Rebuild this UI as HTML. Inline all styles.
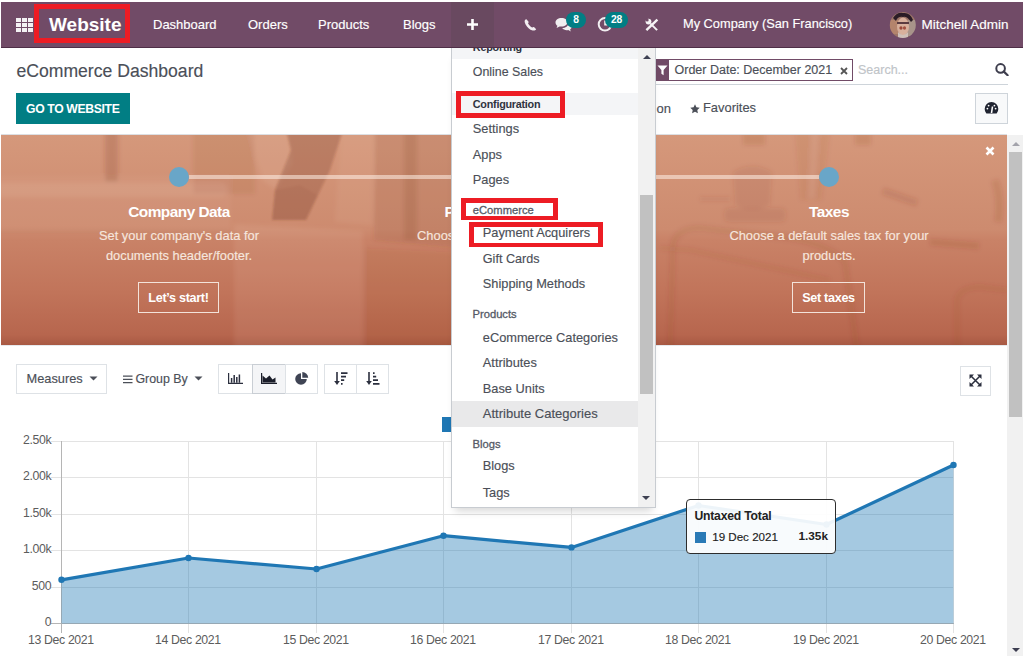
<!DOCTYPE html>
<html><head><meta charset="utf-8">
<style>
*{box-sizing:border-box}
html,body{margin:0;padding:0}
body{width:1024px;height:657px;overflow:hidden;position:relative;background:#fff;font-family:"Liberation Sans",sans-serif;color:#4a4f59}
.a{position:absolute}
.t{position:absolute;white-space:nowrap;line-height:1;-webkit-text-stroke:0.15px currentColor}
.t[style*="bold"]{-webkit-text-stroke:0}
.red{position:absolute;border:5px solid #ed1c24}
#nav{left:1px;top:2px;width:1022px;height:46px;background:#714b67;border-bottom:1px solid #4f2e47}
#nav .t{color:#fff}
</style></head><body>

<!-- NAVBAR -->
<div id="nav" class="a"></div>
<!-- grid icon -->
<svg class="a" style="left:16px;top:18px" width="18" height="15" viewBox="0 0 18 15">
<g fill="#f4f2f4">
<rect x="0" y="0" width="5" height="4"/><rect x="6" y="0" width="5" height="4"/><rect x="12" y="0" width="5" height="4"/>
<rect x="0" y="5" width="5" height="4"/><rect x="6" y="5" width="5" height="4"/><rect x="12" y="5" width="5" height="4"/>
<rect x="0" y="10" width="5" height="4"/><rect x="6" y="10" width="5" height="4"/><rect x="12" y="10" width="5" height="4"/>
</g></svg>
<div class="t" style="left:49px;top:15px;font-size:19px;font-weight:bold;color:#fff">Website</div>
<div class="red" style="left:34px;top:4px;width:96px;height:39px"></div>

<div class="t" style="left:153px;top:18px;font-size:13px;color:#fff">Dashboard</div>
<div class="t" style="left:248px;top:18px;font-size:13px;color:#fff">Orders</div>
<div class="t" style="left:318px;top:18px;font-size:13px;color:#fff">Products</div>
<div class="t" style="left:403px;top:18px;font-size:13px;color:#fff">Blogs</div>
<div class="a" style="left:451px;top:2px;width:43px;height:45px;background:#694960"></div>
<svg class="a" style="left:467px;top:19px" width="11" height="11" viewBox="0 0 11 11"><path d="M4.2 0h2.6v4.2H11v2.6H6.8V11H4.2V6.8H0V4.2h4.2z" fill="#fff"/></svg>

<!-- phone -->
<svg class="a" style="left:523.8px;top:19.4px" width="13" height="12" viewBox="0 0 13 12"><path d="M1.6 0.6 C0.2 1.4 0.4 3.4 1.6 5.4 C3.2 8.2 5.6 10.8 8.6 11.4 C10.2 11.7 11.6 11.2 12.2 10.2 L10.2 8.2 C9.6 7.8 9 8 8.4 8.6 C6.6 7.8 4.8 6 4 4.2 C4.6 3.6 4.8 3 4.4 2.4 L2.6 0.4 C2.2 0.1 1.9 0.4 1.6 0.6z" fill="#f2eef1"/></svg>
<!-- chat -->
<svg class="a" style="left:555px;top:17px" width="17" height="15" viewBox="0 0 17 15"><path d="M6.5 1C3 1 0.5 3 0.5 5.4c0 1.3 0.7 2.5 1.9 3.3L1.6 11l3-1.6c0.6 0.1 1.2 0.2 1.9 0.2 3.5 0 6-2 6-4.3S10 1 6.5 1z" fill="#f0eef0"/><path d="M13.4 6.2c0 2.9-3 4.9-6.2 4.9 0.9 1.3 2.6 2.1 4.5 2.1 0.5 0 1-0.1 1.5-0.2l2.6 1.4-0.7-2c1.1-0.7 1.7-1.7 1.7-2.9 0-1.4-1.1-2.6-2.6-3.1z" fill="#f0eef0"/></svg>
<div class="a" style="left:566px;top:12px;width:20px;height:16px;border-radius:8px;background:#017e84"></div>
<div class="t" style="left:566px;top:15px;width:20px;text-align:center;font-size:10.3px;font-weight:bold;color:#fff">8</div>
<!-- clock -->
<svg class="a" style="left:597px;top:16px" width="16" height="16" viewBox="0 0 16 16"><circle cx="8" cy="8.3" r="6.3" fill="none" stroke="#f2eef1" stroke-width="2"/><path d="M8 4.5V8.6H11" fill="none" stroke="#f2eef1" stroke-width="1.6"/></svg>
<div class="a" style="left:605px;top:12px;width:23px;height:16px;border-radius:8px;background:#017e84"></div>
<div class="t" style="left:605px;top:15px;width:23px;text-align:center;font-size:10.3px;letter-spacing:-0.3px;font-weight:bold;color:#fff">28</div>
<!-- tools -->
<svg class="a" style="left:644px;top:17px" width="16" height="16" viewBox="0 0 16 16"><path d="M2.4 13.1L13.4 2.7" stroke="#f6f4f6" stroke-width="2.4"/><path d="M6.5 6.6L13.1 13.1" stroke="#f6f4f6" stroke-width="2"/><circle cx="4.5" cy="4.6" r="2.9" fill="#f6f4f6"/><circle cx="3.2" cy="3.1" r="1.5" fill="#714b67"/></svg>
<div class="t" style="left:683px;top:18px;font-size:12.8px;color:#fff">My Company (San Francisco)</div>
<svg class="a" style="left:889px;top:12px" width="28" height="26" viewBox="0 0 28 26"><defs><clipPath id="av"><circle cx="13.8" cy="13" r="13"/></clipPath><filter id="avb"><feGaussianBlur stdDeviation="0.7"/></filter></defs><g clip-path="url(#av)"><g filter="url(#avb)">
<rect width="28" height="26" fill="#9c7468"/>
<rect x="0" y="8" width="9" height="14" fill="#b4846c"/>
<rect x="19" y="8" width="9" height="16" fill="#a8948a"/>
<path d="M4 6 Q8 0 14 1 Q21 0 24 8 L22 10 Q18 4 14 5 Q9 4 7 9z" fill="#2a1d25"/>
<ellipse cx="14" cy="14.5" rx="6" ry="9" fill="#d8b09c"/>
<rect x="8" y="10" width="12" height="2" fill="#5a3a40"/>
<ellipse cx="12" cy="16" rx="1.6" ry="1.8" fill="#9a4a3a"/>
<ellipse cx="15.5" cy="16" rx="1.6" ry="1.8" fill="#a25040"/>
<path d="M9 20 Q14 26 19 20 L19 26 L9 26z" fill="#cfc0b8"/>
</g></g></svg>
<div class="t" style="left:921.5px;top:18px;font-size:13.5px;color:#fff">Mitchell Admin</div>

<!-- CONTROL PANEL -->
<div class="t" style="left:16.5px;top:63px;font-size:17.6px;color:#4b4f58">eCommerce Dashboard</div>
<div class="a" style="left:16px;top:93px;width:114px;height:31px;background:#017e84"></div>
<div class="t" style="left:26px;top:103px;font-size:12.2px;font-weight:bold;letter-spacing:-0.35px;color:#fff">GO TO WEBSITE</div>

<div class="a" style="left:600px;top:84px;width:408px;height:1px;background:#ced4da"></div>
<div class="a" style="left:656px;top:59px;width:197px;height:22px;border:1px solid #714b67"></div>
<div class="a" style="left:656px;top:59px;width:13px;height:22px;background:#714b67"></div>
<svg class="a" style="left:657px;top:65px" width="11" height="11" viewBox="0 0 11 11"><path d="M0.5 0.5h10L6.6 5v5.2L4.4 8.8V5z" fill="#fff"/></svg>
<div class="t" style="left:674.5px;top:63.5px;font-size:12.5px;color:#4b4f58">Order Date: December 2021</div>
<svg class="a" style="left:840px;top:67px" width="8" height="8" viewBox="0 0 8 8"><path d="M1 1L7 7M7 1L1 7" stroke="#555" stroke-width="1.8"/></svg>
<div class="t" style="left:858px;top:63.5px;font-size:12.5px;color:#c0c4c8">Search...</div>
<svg class="a" style="left:995px;top:63px" width="14" height="13" viewBox="0 0 14 13"><circle cx="5.6" cy="5.4" r="4.3" fill="none" stroke="#3d3d4d" stroke-width="2"/><path d="M8.6 8.4L12.6 12.2" stroke="#3d3d4d" stroke-width="2.2" stroke-linecap="round"/></svg>

<div class="t" style="left:656.5px;top:101.8px;font-size:13px;color:#4b4f58">on</div>
<svg class="a" style="left:689.7px;top:104px" width="10" height="10" viewBox="0 0 10 10"><path d="M5 0.3l1.4 3 3.3 0.4-2.4 2.3 0.6 3.3L5 7.7 2.1 9.3l0.6-3.3L0.3 3.7l3.3-0.4z" fill="#4b4f58"/></svg>
<div class="t" style="left:703px;top:101.8px;font-size:12.9px;color:#4b4f58">Favorites</div>
<div class="a" style="left:975px;top:93px;width:33px;height:31px;border:1px solid #ced4da;background:#f8f9fa"></div>
<svg class="a" style="left:984px;top:101px" width="15" height="14" viewBox="0 0 15 14"><path d="M7.5 1A6.8 6.8 0 0 0 0.7 7.8c0 1.7 0.6 3.3 1.7 4.6h10.2c1.1-1.3 1.7-2.9 1.7-4.6A6.8 6.8 0 0 0 7.5 1z" fill="#1f2330"/><path d="M7.5 12l1-6.5" stroke="#fff" stroke-width="1.6"/><circle cx="3.4" cy="7.6" r="0.9" fill="#fff"/><circle cx="4.6" cy="4.6" r="0.9" fill="#fff"/><circle cx="11.6" cy="7.6" r="0.9" fill="#fff"/><circle cx="10.4" cy="4.6" r="0.9" fill="#fff"/></svg>
<div class="a" style="left:1px;top:134px;width:1006px;height:1px;background:#dcdfe3"></div>

<!-- BANNER -->
<svg class="a" style="left:1px;top:135px" width="1006" height="210" viewBox="1 135 1006 210">
<defs>
<linearGradient id="bg" x1="0" y1="0" x2="0" y2="1">
<stop offset="0" stop-color="#d5987b"/><stop offset="0.45" stop-color="#cd8b6f"/><stop offset="0.5" stop-color="#c98267"/><stop offset="0.75" stop-color="#c1745a"/><stop offset="0.95" stop-color="#b7664e"/><stop offset="1" stop-color="#a85943"/>
</linearGradient>
<filter id="b1" x="-20%" y="-20%" width="140%" height="140%"><feGaussianBlur stdDeviation="1.2"/></filter>
<filter id="b2" x="-20%" y="-20%" width="140%" height="140%"><feGaussianBlur stdDeviation="2"/></filter>
<filter id="b4" x="-20%" y="-20%" width="140%" height="140%"><feGaussianBlur stdDeviation="4"/></filter>
</defs>
<rect x="1" y="135" width="1006" height="210" fill="url(#bg)"/>
<g filter="url(#b2)">
<rect x="105" y="130" width="13" height="52" fill="#7a3a25" fill-opacity="0.2"/>
<rect x="-5" y="176" width="236" height="54" fill="#fff0e6" fill-opacity="0.04"/>
<rect x="193" y="130" width="62" height="64" fill="#7a3a25" fill-opacity="0.09"/>
<rect x="-10" y="183" width="238" height="14" rx="7" fill="#fff0e6" fill-opacity="0.08"/>
<rect x="-5" y="229" width="236" height="3" fill="#8a4a35" fill-opacity="0.06"/>
<polygon points="248,130 288,130 292,164 275,189 262,180" fill="#ffece0" fill-opacity="0.08"/>

<polygon points="341,130 375,130 372,225 335,222" fill="#ffece0" fill-opacity="0.06"/>
<polygon points="234,224 363,231 363,350 234,350" fill="#ffeadc" fill-opacity="0.08"/>
<polygon points="374,130 460,130 460,248 374,240" fill="#7a3a25" fill-opacity="0.13"/>
<rect x="404" y="130" width="13" height="110" fill="#7a3a25" fill-opacity="0.14"/>
<polygon points="363,248 460,252 460,350 363,350" fill="#7a3a25" fill-opacity="0.07"/>
</g>
<g filter="url(#b1)">
<polygon points="286,130 343,130 330,170 318,195 306,220 272,220 275,190 285,165 291,150" fill="#6e3020" fill-opacity="0.25"/>
<polygon points="300,185 318,195 306,220 272,220 275,190" fill="#6e3020" fill-opacity="0.06"/>
</g>
<g filter="url(#b2)">
<path d="M733 172 Q752 160 772 172 L770 205 Q752 214 735 205z" fill="#7a3a25" fill-opacity="0.1"/>
<rect x="724" y="208" width="62" height="14" rx="5" fill="#7a3a25" fill-opacity="0.1"/>
<rect x="700" y="197" width="30" height="4" fill="#7a3a25" fill-opacity="0.1"/>
<rect x="743" y="133" width="22" height="12" fill="#7a3a25" fill-opacity="0.12"/>
<path d="M795 133 L830 133 L822 200 L800 200z" fill="#7a3a25" fill-opacity="0.07"/>
<path d="M812 133 L818 133 L814 198 L809 198z" fill="#fff3ea" fill-opacity="0.1"/>
<rect x="855" y="133" width="16" height="12" fill="#7a3a25" fill-opacity="0.12"/>
<path d="M670 350 L673 245 Q676 228 700 228 L790 238 Q830 245 845 262 L857 350" fill="none" stroke="#7a3a25" stroke-opacity="0.09" stroke-width="6"/>
<path d="M660 248 L690 250 L830 280" fill="none" stroke="#7a3a25" stroke-opacity="0.08" stroke-width="5"/>
<path d="M883 191 L917 203" stroke="#7a3a25" stroke-opacity="0.14" stroke-width="7"/>
<path d="M930 242 L979 246" stroke="#7a3a25" stroke-opacity="0.12" stroke-width="7"/>
<path d="M995 180 Q1002 200 998 222" stroke="#7a3a25" stroke-opacity="0.12" stroke-width="8" fill="none"/>
<path d="M957 350 L957 300 Q960 287 980 287 L1007 290" fill="none" stroke="#7a3a25" stroke-opacity="0.08" stroke-width="6"/>
</g>
</svg>
<div class="a" style="left:189px;top:175px;width:630px;height:4px;background:rgba(255,240,232,0.55)"></div>
<div class="a" style="left:169px;top:167px;width:20px;height:20px;border-radius:50%;background:#69a6c8"></div>
<div class="a" style="left:494px;top:167px;width:20px;height:20px;border-radius:50%;background:#69a6c8"></div>
<div class="a" style="left:819px;top:167px;width:20px;height:20px;border-radius:50%;background:#69a6c8"></div>
<div class="t" style="left:79px;top:203.65px;width:200px;text-align:center;font-size:15.4px;font-weight:bold;letter-spacing:-0.52px;color:#fff">Company Data</div>
<div class="t" style="left:79px;top:230.4px;width:200px;text-align:center;font-size:12.9px;color:#f6e6de">Set your company's data for</div>
<div class="t" style="left:79px;top:249.6px;width:200px;text-align:center;font-size:12.9px;color:#f6e6de">documents header/footer.</div>
<div class="a" style="left:138px;top:282px;width:81px;height:31px;border:1px solid #f3e3da"></div>
<div class="t" style="left:138px;top:291.6px;width:81px;text-align:center;font-size:12.6px;font-weight:bold;letter-spacing:-0.3px;color:#fff">Let’s start!</div>
<div class="t" style="left:444.4px;top:203.65px;font-size:15.4px;font-weight:bold;letter-spacing:-0.52px;color:#fff">Payment Method</div>
<div class="t" style="left:417px;top:230.4px;font-size:12.9px;color:#f6e6de">Choose a payment method.</div>
<div class="t" style="left:729px;top:203.65px;width:200px;text-align:center;font-size:15.4px;font-weight:bold;letter-spacing:-0.52px;color:#fff">Taxes</div>
<div class="t" style="left:679px;top:230.4px;width:300px;text-align:center;font-size:12.9px;color:#f6e6de">Choose a default sales tax for your</div>
<div class="t" style="left:729px;top:249.6px;width:200px;text-align:center;font-size:12.9px;color:#f6e6de">products.</div>
<div class="a" style="left:792px;top:282px;width:73px;height:31px;border:1px solid #f3e3da"></div>
<div class="t" style="left:792px;top:291.6px;width:73px;text-align:center;font-size:12.6px;font-weight:bold;letter-spacing:-0.3px;color:#fff">Set taxes</div>
<svg class="a" style="left:985px;top:146px" width="10" height="10" viewBox="0 0 10 10"><path d="M1.5 1.5L8.5 8.5M8.5 1.5L1.5 8.5" stroke="#fff" stroke-width="2.6"/></svg>
<div class="a" style="left:1px;top:345px;width:1006px;height:1px;background:#e6e9ed"></div>

<!-- TOOLBAR -->
<div class="a" style="left:16px;top:364px;width:91px;height:30px;border:1px solid #dee2e6"></div>
<div class="t" style="left:26.5px;top:372.9px;font-size:12.8px;color:#4b4f58">Measures</div>
<svg class="a" style="left:89px;top:376px" width="9" height="5" viewBox="0 0 9 5"><path d="M0.5 0.5h8L4.5 4.5z" fill="#4b4f58"/></svg>
<svg class="a" style="left:123px;top:375px" width="10" height="9" viewBox="0 0 10 9"><path d="M0 1.2h9.5M0 4.4h9.5M0 7.6h9.5" stroke="#4b4f58" stroke-width="1.3"/></svg>
<div class="t" style="left:135.4px;top:372.9px;font-size:12.4px;color:#4b4f58">Group By</div>
<svg class="a" style="left:194px;top:376px" width="9" height="5" viewBox="0 0 9 5"><path d="M0.5 0.5h8L4.5 4.5z" fill="#4b4f58"/></svg>
<div class="a" style="left:218px;top:364px;width:100px;height:30px;border:1px solid #dee2e6"></div>
<div class="a" style="left:252px;top:364px;width:34px;height:30px;border:1px solid #c9ced4;background:#f4f5f7"></div>
<div class="a" style="left:285px;top:364px;width:1px;height:30px;background:#dee2e6"></div>
<div class="a" style="left:324px;top:364px;width:65px;height:30px;border:1px solid #dee2e6"></div>
<div class="a" style="left:356px;top:364px;width:1px;height:30px;background:#dee2e6"></div>
<svg class="a" style="left:228px;top:373px" width="15" height="11" viewBox="0 0 15 11"><path d="M0.6 0v10.4H15" fill="none" stroke="#2b2f3e" stroke-width="1.2"/><path d="M3.6 5v4.8M6.2 2v7.8M8.8 4v5.8M11.4 1.5v8.3" stroke="#2b2f3e" stroke-width="1.5"/></svg>
<svg class="a" style="left:261px;top:373px" width="16" height="11" viewBox="0 0 16 11"><path d="M0.6 0v10.4H16" fill="none" stroke="#1a1d29" stroke-width="1.2"/><path d="M1.5 9.5V2.5L5 5.5 8.5 2.5l3 4 3-2v5z" fill="#1a1d29"/></svg>
<svg class="a" style="left:295px;top:371.5px" width="14" height="13" viewBox="0 0 14 13"><path d="M6 1.2A5.8 5.8 0 1 0 11.8 7H6z" fill="#3f4454"/><path d="M7.3 0v5.7h5.9A5.9 5.9 0 0 0 7.3 0z" fill="#3f4454"/></svg>
<svg class="a" style="left:334px;top:371.5px" width="14" height="14" viewBox="0 0 14 14"><path d="M3 0v11" stroke="#2b2f3e" stroke-width="1.6"/><path d="M0.2 9l2.8 4 2.8-4z" fill="#2b2f3e"/><path d="M7 1.2h6.5M7 4.7h5M7 8.2h3.2M7 11.8h1.6" stroke="#2b2f3e" stroke-width="1.7"/></svg>
<svg class="a" style="left:366px;top:371.5px" width="14" height="14" viewBox="0 0 14 14"><path d="M3 0v11" stroke="#2b2f3e" stroke-width="1.6"/><path d="M0.2 9l2.8 4 2.8-4z" fill="#2b2f3e"/><path d="M7 1.2h1.6M7 4.7h3.2M7 8.2h5M7 11.8h6.5" stroke="#2b2f3e" stroke-width="1.7"/></svg>
<div class="a" style="left:960px;top:366px;width:31px;height:30px;border:1px solid #dee2e6"></div>
<svg class="a" style="left:969px;top:374px" width="13" height="13" viewBox="0 0 13 13"><path d="M2 2L11 11M11 2L2 11" stroke="#2b2f3e" stroke-width="1.5"/><path d="M0.5 0.5h4.5L0.5 5zM12.5 0.5v4.5L8 0.5zM0.5 12.5V8l4.5 4.5zM12.5 12.5H8l4.5-4.5z" fill="#2b2f3e"/></svg>

<!-- CHART -->
<div class="a" style="left:442px;top:417px;width:40px;height:15px;background:#1f77b4"></div>
<svg class="a" style="left:0;top:0" width="1024" height="657" viewBox="0 0 1024 657">
<g stroke="#e3e3e3" stroke-width="1"><line x1="51" y1="441.5" x2="954" y2="441.5"/><line x1="51" y1="477.5" x2="954" y2="477.5"/><line x1="51" y1="514.5" x2="954" y2="514.5"/><line x1="51" y1="550.5" x2="954" y2="550.5"/><line x1="51" y1="587.5" x2="954" y2="587.5"/><line x1="51" y1="623.5" x2="954" y2="623.5"/><line x1="61.5" y1="441" x2="61.5" y2="633"/><line x1="188.5" y1="441" x2="188.5" y2="633"/><line x1="316.5" y1="441" x2="316.5" y2="633"/><line x1="443.5" y1="441" x2="443.5" y2="633"/><line x1="571.5" y1="441" x2="571.5" y2="633"/><line x1="698.5" y1="441" x2="698.5" y2="633"/><line x1="826.5" y1="441" x2="826.5" y2="633"/><line x1="953.5" y1="441" x2="953.5" y2="633"/></g>
<line x1="61.5" y1="441" x2="61.5" y2="633" stroke="#b5b5b5"/>
<line x1="51" y1="623.5" x2="954" y2="623.5" stroke="#b5b5b5"/>
<polygon points="61.5,623.5 61.5,579.8 188.5,558 316.5,569 443.5,535.7 571.5,547.4 698.5,505.5 826.5,524.5 953.5,465 953.5,623.5" fill="#1f77b4" fill-opacity="0.4"/>
<polyline points="61.5,579.8 188.5,558 316.5,569 443.5,535.7 571.5,547.4 698.5,505.5 826.5,524.5 953.5,465" fill="none" stroke="#1f77b4" stroke-width="3.2" stroke-linejoin="round"/>
<g fill="#1f77b4"><circle cx="61.5" cy="579.8" r="3.2"/><circle cx="188.5" cy="558" r="3.2"/><circle cx="316.5" cy="569" r="3.2"/><circle cx="443.5" cy="535.7" r="3.2"/><circle cx="571.5" cy="547.4" r="3.2"/><circle cx="698.5" cy="505.5" r="3.2"/><circle cx="826.5" cy="524.5" r="3.2"/><circle cx="953.5" cy="465" r="3.2"/></g>
<g font-family="Liberation Sans" font-size="12.3" letter-spacing="-0.35" fill="#5c5c5c"><text x="51.3" y="444.3" text-anchor="end">2.50k</text><text x="51.3" y="480.3" text-anchor="end">2.00k</text><text x="51.3" y="517.3" text-anchor="end">1.50k</text><text x="51.3" y="553.3" text-anchor="end">1.00k</text><text x="51.3" y="590.3" text-anchor="end">500</text><text x="51.3" y="626.3" text-anchor="end">0</text><text x="60.9" y="643.8" text-anchor="middle">13 Dec 2021</text><text x="187.9" y="643.8" text-anchor="middle">14 Dec 2021</text><text x="315.9" y="643.8" text-anchor="middle">15 Dec 2021</text><text x="442.9" y="643.8" text-anchor="middle">16 Dec 2021</text><text x="570.9" y="643.8" text-anchor="middle">17 Dec 2021</text><text x="697.9" y="643.8" text-anchor="middle">18 Dec 2021</text><text x="825.9" y="643.8" text-anchor="middle">19 Dec 2021</text><text x="952.9" y="643.8" text-anchor="middle">20 Dec 2021</text></g>
</svg>

<!-- TOOLTIP -->
<div class="a" style="left:686px;top:499px;width:150px;height:55px;border:1px solid #2d2d2d;border-radius:4px;background:rgba(255,255,255,0.92)"></div>
<div class="t" style="left:694.4px;top:509.8px;font-size:12.2px;font-weight:bold;letter-spacing:-0.2px;color:#222">Untaxed Total</div>
<div class="a" style="left:694.5px;top:532px;width:11.5px;height:10.5px;background:#2a7ab6"></div>
<div class="t" style="left:712.2px;top:531.2px;font-size:11.6px;color:#222">19 Dec 2021</div>
<div class="t" style="left:778px;top:531.2px;width:50px;text-align:right;font-size:11.8px;font-weight:bold;color:#222">1.35k</div>

<!-- PAGE SCROLLBAR -->
<div class="a" style="left:1007px;top:135px;width:16px;height:521px;background:#f1f1f1"></div>
<div class="a" style="left:1009px;top:152px;width:13px;height:265px;background:#c1c1c1"></div>
<svg class="a" style="left:1011.5px;top:142px" width="8" height="4" viewBox="0 0 8 4"><path d="M0 4h8L4 0z" fill="#a3a3ab"/></svg>
<svg class="a" style="left:1011.5px;top:648px" width="8" height="4" viewBox="0 0 8 4"><path d="M0 0h8L4 4z" fill="#3c3d50"/></svg>

<!-- DROPDOWN -->
<div class="a" style="left:451px;top:48px;width:205px;height:460px;background:#fff;border:1px solid #c8ccd1;border-top:0;box-shadow:0 7px 8px -4px rgba(0,0,0,0.16)"></div>
<div class="a" style="left:452px;top:48px;width:186px;height:11px;background:#f4f5f7"></div>
<div class="a" style="left:452px;top:93px;width:186px;height:22px;background:#f4f5f7"></div>
<div class="a" style="left:452px;top:401px;width:186px;height:26px;background:#e9e9ea"></div>
<div class="a" style="left:638px;top:48px;width:17px;height:459px;background:#f1f1f1"></div>
<div class="a" style="left:640px;top:195px;width:13px;height:199px;background:#c1c1c1"></div>
<svg class="a" style="left:642.5px;top:55px" width="8" height="4" viewBox="0 0 8 4"><path d="M0 4h8L4 0z" fill="#3e4152"/></svg>
<svg class="a" style="left:642px;top:495.5px" width="8" height="4" viewBox="0 0 8 4"><path d="M0 0h8L4 4z" fill="#3e4152"/></svg>
<div class="a" style="left:452px;top:47.8px;width:186px;height:459px;overflow:hidden;clip-path:inset(0.2px 0 0 0)">
<div class="t" style="left:20.80000000000001px;top:-5.6px;font-size:10.8px;color:#2f3340;font-weight:bold;letter-spacing:-0.2px">Reporting</div>
<div class="t" style="left:20.80000000000001px;top:18.4px;font-size:12.4px;color:#4b4f58">Online Sales</div>
<div class="t" style="left:20.80000000000001px;top:51.5px;font-size:10.8px;color:#2f3340;font-weight:bold;letter-spacing:-0.25px">Configuration</div>
<div class="t" style="left:20.80000000000001px;top:74.9px;font-size:12.8px;color:#4b4f58">Settings</div>
<div class="t" style="left:20.80000000000001px;top:101.7px;font-size:12.8px;color:#4b4f58">Apps</div>
<div class="t" style="left:20.80000000000001px;top:126.7px;font-size:12.8px;color:#4b4f58">Pages</div>
<div class="t" style="left:20.8px;top:157.5px;font-size:11.2px;color:#555a66;-webkit-text-stroke:0.3px #555a66">eCommerce</div>
<div class="t" style="left:30.80000000000001px;top:179.3px;font-size:12.8px;color:#4b4f58">Payment Acquirers</div>
<div class="t" style="left:30.80000000000001px;top:204.9px;font-size:12.6px;color:#4b4f58">Gift Cards</div>
<div class="t" style="left:30.80000000000001px;top:229.8px;font-size:12.8px;color:#4b4f58">Shipping Methods</div>
<div class="t" style="left:20.5px;top:261.7px;font-size:11.2px;color:#555a66;-webkit-text-stroke:0.3px #555a66">Products</div>
<div class="t" style="left:30.80000000000001px;top:284.0px;font-size:12.8px;color:#4b4f58">eCommerce Categories</div>
<div class="t" style="left:30.80000000000001px;top:309.2px;font-size:12.8px;color:#4b4f58">Attributes</div>
<div class="t" style="left:30.80000000000001px;top:334.9px;font-size:12.8px;color:#4b4f58">Base Units</div>
<div class="t" style="left:30.80000000000001px;top:359.4px;font-size:13px;color:#4b4f58">Attribute Categories</div>
<div class="t" style="left:20.6px;top:391.4px;font-size:11.2px;color:#555a66;-webkit-text-stroke:0.3px #555a66">Blogs</div>
<div class="t" style="left:30.69999999999999px;top:412.6px;font-size:12.8px;color:#4b4f58">Blogs</div>
<div class="t" style="left:30.69999999999999px;top:439.1px;font-size:12.8px;color:#4b4f58">Tags</div>
</div>
<div class="red" style="left:456px;top:91px;width:109px;height:27px"></div>
<div class="red" style="left:461px;top:198px;width:97px;height:22px;border-width:5px 5px 4.5px 5px"></div>
<div class="red" style="left:469px;top:222px;width:134px;height:25px;border-width:5px 5px 4.5px 5px"></div>

</body></html>
